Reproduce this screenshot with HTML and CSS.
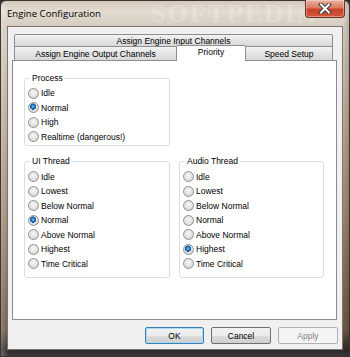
FILE: index.html
```html
<!DOCTYPE html>
<html>
<head>
<meta charset="utf-8">
<link rel="stylesheet" href="styles.css">
</head>
<body>
<div class="window">
  <div class="titlebar">
    <span class="title">Engine Configuration</span>
    <span class="watermark">SOFTPEDIA</span>
    <div class="close">
      <svg width="14" height="11" viewBox="0 0 14 11">
        <path d="M3 1.5 L11 9.5 M11 1.5 L3 9.5" stroke="#3b3b3b" stroke-width="4" stroke-linecap="square"/>
        <path d="M3 1.5 L11 9.5 M11 1.5 L3 9.5" stroke="#ffffff" stroke-width="2" stroke-linecap="square"/>
      </svg>
    </div>
  </div>
  <div class="client">
    <div class="tabctl">
      <div class="row1">
        <div class="tab tab-wide">Assign Engine Input Channels</div>
      </div>
      <div class="row2">
        <div class="tab tab-out">Assign Engine Output Channels</div>
        <div class="tab tab-sel">Priority</div>
        <div class="tab tab-speed">Speed Setup</div>
      </div>
      <div class="panel">
        <div class="group group-process">
          <div class="gtitle">Process</div>
          <div class="opt"><span class="radio"></span>Idle</div>
          <div class="opt"><span class="radio on"></span>Normal</div>
          <div class="opt"><span class="radio"></span>High</div>
          <div class="opt"><span class="radio"></span>Realtime (dangerous!)</div>
        </div>
        <div class="threads">
          <div class="group group-thread">
            <div class="gtitle">UI Thread</div>
            <div class="opt"><span class="radio"></span>Idle</div>
            <div class="opt"><span class="radio"></span>Lowest</div>
            <div class="opt"><span class="radio"></span>Below Normal</div>
            <div class="opt"><span class="radio on"></span>Normal</div>
            <div class="opt"><span class="radio"></span>Above Normal</div>
            <div class="opt"><span class="radio"></span>Highest</div>
            <div class="opt"><span class="radio"></span>Time Critical</div>
          </div>
          <div class="group group-thread group-audio">
            <div class="gtitle">Audio Thread</div>
            <div class="opt"><span class="radio"></span>Idle</div>
            <div class="opt"><span class="radio"></span>Lowest</div>
            <div class="opt"><span class="radio"></span>Below Normal</div>
            <div class="opt"><span class="radio"></span>Normal</div>
            <div class="opt"><span class="radio"></span>Above Normal</div>
            <div class="opt"><span class="radio on"></span>Highest</div>
            <div class="opt"><span class="radio"></span>Time Critical</div>
          </div>
        </div>
      </div>
    </div>
    <div class="buttons">
      <div class="btn btn-default">OK</div>
      <div class="btn">Cancel</div>
      <div class="btn btn-disabled">Apply</div>
    </div>
  </div>
</div>
</body>
</html>
```
FILE: styles.css
```css
* { box-sizing: border-box; }
html, body { margin: 0; padding: 0; }
body {
  width: 350px;
  height: 357px;
  overflow: hidden;
  background: #2e2e2e;
  font-family: "Liberation Sans", Arial, sans-serif;
  font-size: 8.5px;
  color: #000;
}
.window {
  position: relative;
  width: 350px;
  height: 357px;
  border: 1px solid #3a3631;
  border-radius: 6px 6px 0 0;
  background:
    linear-gradient(to right, rgba(255,255,255,0.25), rgba(255,255,255,0) 8px, rgba(255,255,255,0) 342px, rgba(0,0,0,0.15)),
    linear-gradient(to bottom, #d3c8bb 0, #e3dbd1 10px, #d6ccbf 26px, #c4b39f 90px, #9c846c 220px, #6b5644 330px, #2f2a26 349px, #3c3c3c 357px);
}
.titlebar {
  height: 25px;
  display: flex;
  align-items: center;
  padding-left: 6px;
}
.title {
  font-family: "Open Sans", "Noto Sans", sans-serif;
  font-size: 9.6px;
  color: #000;
}
.watermark {
  position: absolute;
  z-index: 0;
  left: 150px;
  top: -2px;
  font-family: "Liberation Serif", serif;
  font-weight: bold;
  font-size: 26px;
  letter-spacing: 2px;
  color: rgba(255,255,255,0.22);
}
.close {
  position: absolute;
  z-index: 2;
  right: 4px;
  top: -1px;
  width: 40px;
  height: 18px;
  border: 1px solid #6a2f25;
  border-top: none;
  border-radius: 0 0 4px 4px;
  background: linear-gradient(to bottom, #eab2a2 0, #dc7a62 45%, #c8432a 55%, #d4573a 100%);
  box-shadow: inset 0 0 0 1px rgba(255,255,255,0.35);
  display: flex;
  align-items: center;
  justify-content: center;
}
.client {
  margin-left: 6px;
  width: 336px;
  height: 324px;
  border: 1px solid #7a7570;
  background: #f0f0f0;
  padding: 7px 0 0 4px;
}
.tabctl {
  width: 325px;
}
.row1 {
  display: flex;
  padding: 0 4px 0 2px;
}
.tab {
  border: 1px solid #8c8e94;
  border-bottom: none;
  background: linear-gradient(to bottom, #f3f3f3, #e4e4e4 50%, #d8d8d8);
  display: flex;
  align-items: center;
  justify-content: center;
  white-space: nowrap;
}
.tab-wide {
  width: 319px;
  height: 12px;
  border-radius: 2px 2px 0 0;
}
.row2 {
  display: flex;
  height: 14px;
  padding: 0 4px 0 2px;
}
.tab-out {
  width: 162px;
  height: 14px;
  border-right: none;
}
.tab-sel {
  position: relative;
  z-index: 1;
  width: 70px;
  height: 16px;
  margin-top: -1px;
  background: #fff;
  border-radius: 2px 2px 0 0;
  align-items: flex-start;
  padding-top: 1px;
}
.tab-speed {
  width: 87px;
  height: 14px;
  border-left: none;
}
.panel {
  width: 325px;
  height: 260px;
  border: 1px solid #898c95;
  background: #fff;
  padding: 17px 11px;
}
.group {
  border: 1px solid #d5dfe5;
  border-radius: 3px;
  padding: 0 0 0 3px;
}
.group-process {
  width: 146px;
  height: 68px;
}
.threads {
  display: flex;
  gap: 9px;
  margin-top: 15px;
}
.group-thread {
  width: 146px;
  height: 117px;
}
.group-audio {
  width: 145px;
}
.gtitle {
  width: fit-content;
  margin: -7px 0 1px 2px;
  padding: 0 2px;
  line-height: 13px;
  height: 13px;
  background: #fff;
}
.group-thread .gtitle {
  margin-bottom: 1.5px;
}
.opt {
  height: 14.5px;
  display: flex;
  align-items: center;
  gap: 2px;
  white-space: nowrap;
}
.radio {
  flex: none;
  width: 11px;
  height: 11px;
  border-radius: 50%;
  border: 1px solid #8f9090;
  background: radial-gradient(circle at 50% 40%, #f7f7f7 0, #e6e6e6 45%, #cfcfcf 100%);
}
.radio.on {
  background:
    radial-gradient(circle at 45% 40%, #8ccdf5 0, #2a84c8 1.5px, #0b4f8f 3px, rgba(11,79,143,0) 3.3px),
    radial-gradient(circle at 50% 40%, #f7f7f7 0, #e6e6e6 45%, #cfcfcf 100%);
}
.buttons {
  display: flex;
  justify-content: flex-end;
  gap: 7px;
  margin-top: 7px;
  padding-right: 4px;
}
.btn {
  width: 60px;
  height: 17px;
  border: 1px solid #707070;
  border-radius: 2px;
  background: linear-gradient(to bottom, #f2f2f2 0, #ebebeb 50%, #dddddd 50%, #cfcfcf 100%);
  display: flex;
  align-items: center;
  justify-content: center;
}
.btn-default {
  width: 59px;
  border-color: #3c7fb1;
  box-shadow: inset 0 0 0 1px #a8dcf6;
}
.btn-disabled {
  border-color: #adb2b5;
  background: #f4f4f4;
  color: #838383;
}
```
